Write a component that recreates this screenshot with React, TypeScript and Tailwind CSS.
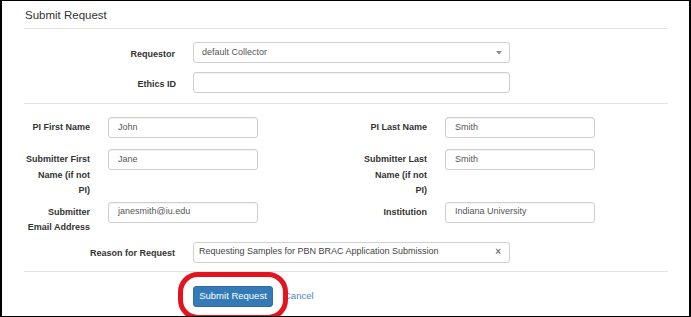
import React from "react";

const font = { fontFamily: '"Liberation Sans", Arial, sans-serif' };

function Label({ children, w }: { children: React.ReactNode; w: string }) {
  return (
    <div className={`${w} shrink-0 text-right font-bold text-[9px] leading-[15.5px] pt-[3px] text-[#333] whitespace-nowrap`}>
      {children}
    </div>
  );
}

function Input({ value, w }: { value?: string; w: string }) {
  return (
    <div
      className={`${w} h-[21px] shrink-0 border border-[#cfcfcf] rounded-[3px] bg-white flex items-center pl-[9px] text-[9px] text-[#555] shadow-[inset_0_1px_1px_rgba(0,0,0,0.06)]`}
    >
      {value}
    </div>
  );
}

export default function App() {
  return (
    <div
      style={font}
      className="relative w-[691px] h-[317px] bg-white border-l-2 border-r-2 border-t border-b border-black overflow-hidden"
    >
      <div className="pl-[22px] pr-[21px]">
        {/* Header */}
        <div className="h-[28px] border-b border-[#e3e3e3] flex items-center pl-px pt-[2px] text-[11.5px] text-[#333]">
          Submit Request
        </div>

        {/* Requestor */}
        <div className="flex mt-[13px]">
          <Label w="w-[151px]">
            <span className="block pt-[2px]">Requestor</span>
          </Label>
          <div className="ml-[18px] w-[317px] h-[21px] border border-[#cfcfcf] rounded-[3px] flex items-center justify-between pl-[8px] pr-[7px] text-[9px] text-[#555]">
            <span>default Collector</span>
            <svg width="6" height="4" viewBox="0 0 6 4">
              <path d="M0 0 L6 0 L3 3.5 Z" fill="#8a8a8a" />
            </svg>
          </div>
        </div>

        {/* Ethics */}
        <div className="flex mt-[9px]">
          <Label w="w-[152px]">
            <span className="block pt-[2px]">Ethics ID</span>
          </Label>
          <div className="ml-[17px]">
            <Input w="w-[317px]" />
          </div>
        </div>

        <div className="mt-[10px] border-b border-[#e3e3e3]" />

        {/* PI names */}
        <div className="flex mt-[13px]">
          <Label w="w-[66px]">PI First Name</Label>
          <div className="ml-[18px]">
            <Input w="w-[150px]" value="John" />
          </div>
          <div className="ml-[103px]">
            <Label w="w-[66px]">PI Last Name</Label>
          </div>
          <div className="ml-[18px]">
            <Input w="w-[150px]" value="Smith" />
          </div>
        </div>

        {/* Submitter names */}
        <div className="flex mt-[11px]">
          <Label w="w-[66px]">
            Submitter First
            <br />
            Name (if not
            <br />
            PI)
          </Label>
          <div className="ml-[18px]">
            <Input w="w-[150px]" value="Jane" />
          </div>
          <div className="ml-[103px]">
            <Label w="w-[66px]">
              Submitter Last
              <br />
              Name (if not
              <br />
              PI)
            </Label>
          </div>
          <div className="ml-[18px]">
            <Input w="w-[150px]" value="Smith" />
          </div>
        </div>

        {/* Email / Institution */}
        <div className="flex mt-[3px]">
          <Label w="w-[66px]">
            Submitter
            <br />
            Email Address
          </Label>
          <div className="ml-[18px]">
            <Input w="w-[150px]" value="janesmith@iu.edu" />
          </div>
          <div className="ml-[103px]">
            <Label w="w-[66px]">Institution</Label>
          </div>
          <div className="ml-[18px]">
            <Input w="w-[150px]" value="Indiana University" />
          </div>
        </div>

        {/* Reason */}
        <div className="flex mt-[6px]">
          <Label w="w-[151px]">
            <span className="block pt-[1px]">Reason for Request</span>
          </Label>
          <div className="ml-[18px] w-[317px] h-[21px] border border-[#cfcfcf] rounded-[3px] flex items-center justify-between pl-[5px] pr-[8px] text-[9px] text-[#444]">
            <span>Requesting Samples for PBN BRAC Application Submission</span>
            <span className="text-[10px] font-bold text-[#777] leading-none">×</span>
          </div>
        </div>

        <div className="mt-[8px] border-b border-[#e3e3e3]" />

        {/* Buttons */}
        <div className="flex items-center mt-[14px] pl-[169px]">
          <button className="w-[80px] h-[21px] bg-[#337ab7] border border-[#2e6da4] rounded-[3px] text-white text-[9.5px] flex items-center justify-center">
            Submit Request
          </button>
          <span className="ml-[11px] text-[9.5px] text-[#4a86c5]">Cancel</span>
        </div>
      </div>

      {/* Red highlight */}
      <div className="absolute left-[176px] top-[271px] w-[110px] h-[48px] border-[5px] border-[#e2141f] rounded-[20px] pointer-events-none" />
    </div>
  );
}
